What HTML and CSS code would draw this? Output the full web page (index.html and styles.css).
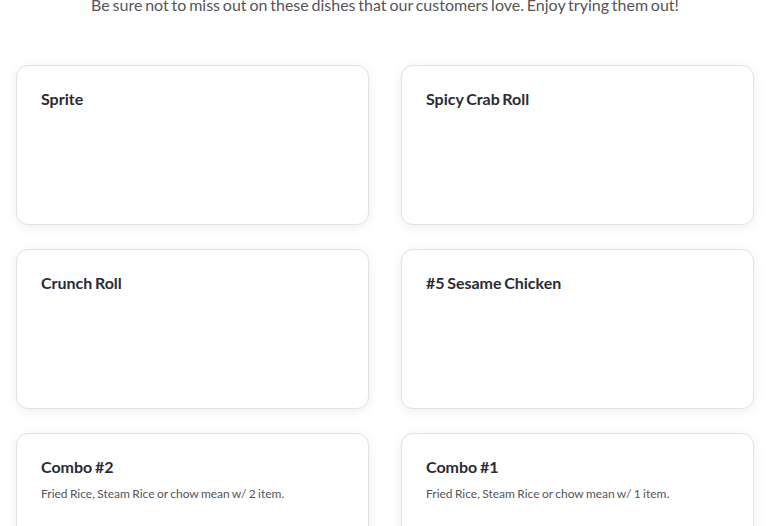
FILE: index.html
```html
<!DOCTYPE html>
<html lang="en">
<head>
<meta charset="utf-8">
<link rel="stylesheet" href="styles.css">
</head>
<body>
<header class="intro">
  <p class="intro-text">Be sure not to miss out on these dishes that our customers love. Enjoy trying them out!</p>
</header>
<main class="grid">
  <article class="card"><h3 class="card-title">Sprite</h3></article>
  <article class="card"><h3 class="card-title">Spicy Crab Roll</h3></article>
  <article class="card"><h3 class="card-title">Crunch Roll</h3></article>
  <article class="card"><h3 class="card-title">#5 Sesame Chicken</h3></article>
  <article class="card"><h3 class="card-title">Combo #2</h3><p class="card-desc">Fried Rice, Steam Rice or chow mean w/ 2 item.</p></article>
  <article class="card"><h3 class="card-title">Combo #1</h3><p class="card-desc">Fried Rice, Steam Rice or chow mean w/ 1 item.</p></article>
</main>
</body>
</html>
```
FILE: styles.css
```css
html, body {
  margin: 0;
  padding: 0;
  background: #ffffff;
  font-family: Lato, "Open Sans", sans-serif;
  word-spacing: -0.08em;
}
.intro {
  margin-top: -5px;
  text-align: center;
}
.intro-text {
  margin: 0;
  font-size: 16px;
  line-height: 20px;
  color: #555559;
}
.grid {
  display: grid;
  grid-template-columns: 1fr 1fr;
  column-gap: 32px;
  row-gap: 24px;
  padding: 50px 16px 0;
}
.card {
  box-sizing: border-box;
  min-height: 160px;
  padding: 23px 24px 24px;
  border: 1px solid #e2e2e2;
  border-radius: 12px;
  background: #fff;
  box-shadow: 0 2px 12px rgba(0, 0, 0, 0.07);
}
.card-title {
  margin: 0;
  font-size: 16px;
  line-height: 1.2;
  font-weight: 700;
  color: #2b2b35;
}
.card-desc {
  margin: 11px 0 0;
  font-size: 12px;
  line-height: 1.2;
  color: #55555a;
  word-spacing: -0.06em;
}
```
